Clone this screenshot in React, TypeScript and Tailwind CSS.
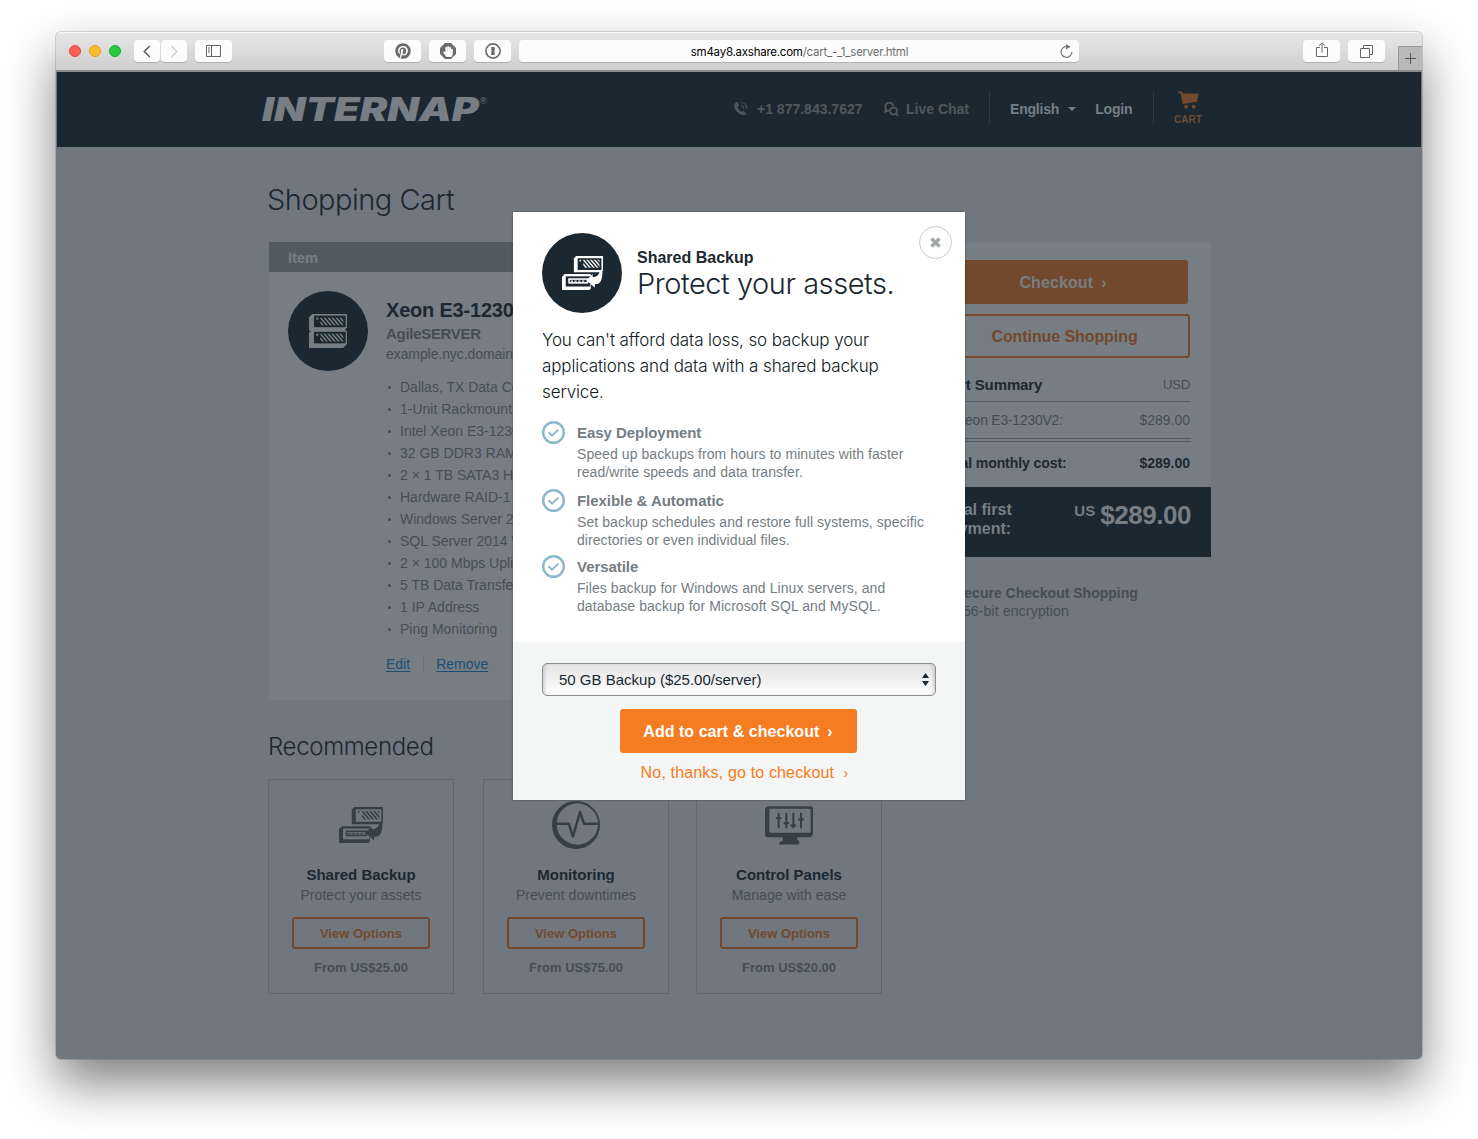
import React from "react";
import { FaPinterest, FaHandPaper } from "react-icons/fa";

const specs = [
  "Dallas, TX Data Center",
  "1-Unit Rackmount",
  "Intel Xeon E3-1230V2",
  "32 GB DDR3 RAM",
  "2 × 1 TB SATA3 HDD",
  "Hardware RAID-1",
  "Windows Server 2012",
  "SQL Server 2014 Web",
  "2 × 100 Mbps Uplinks",
  "5 TB Data Transfer",
  "1 IP Address",
  "Ping Monitoring",
];

type Tone = { fg: string; bg: string };

/** Diagonal vent slots, clipped to the given box. */
function Vents({ x, y, width, height, color }: { x: number; y: number; width: number; height: number; color: string }) {
  return (
    <svg x={x} y={y} width={width} height={height} viewBox={`0 0 ${width} ${height}`}>
      {[-1, 0, 1, 2, 3, 4, 5, 6].map((i) => (
        <path key={i} d={`M${i * 12 - 3} -4l36 42`} stroke={color} strokeWidth="4.6" />
      ))}
    </svg>
  );
}

function BackupIcon({ fg, bg, className }: Tone & { className: string }) {
  return (
    <svg viewBox="0 0 131 107" preserveAspectRatio="none" className={className}>
      <path d="M38 8 45 0H131V46L125 51H38Z" fill={fg} />
      <rect x="50" y="7" width="76" height="37" fill={bg} />
      <rect x="56" y="12" width="5" height="5" fill={fg} />
      <Vents x={68} y={12} width={52} height={25} color={fg} />
      <path d="M0 66 8 57H92V103L87 107H0Z" fill={fg} />
      <path d="M12 64H90V96H12Z" fill={bg} />
      <path d="M20 70H84V87H20Z" fill={fg} />
      <path d="M25 75H80V82H25Z" fill={bg} />
      <path d="M28 79H78" stroke={fg} strokeWidth="4" strokeDasharray="7 5" />
      <path d="M78 76 98 57 98 66C110 66 119 60 120 47H129C130 78 120 91 106 88L104 99Z" fill={fg} />
    </svg>
  );
}

function ServerIcon({ fg, bg, className }: Tone & { className: string }) {
  return (
    <svg viewBox="0 0 115 103" className={className}>
      <path d="M0 10 10 0H115V42L109 48 115 53V91L103 103H0V56L5 52 0 49Z" fill={fg} />
      {[5, 54].map((y) => (
        <g key={y}>
          <rect x="15" y={y} width="96" height="35" fill={bg} />
          <rect x="22" y={y + 6} width="6" height="6" fill={fg} />
          <Vents x={34} y={y + 6} width={70} height={23} color={fg} />
        </g>
      ))}
    </svg>
  );
}

function MonitoringIcon() {
  return (
    <svg viewBox="0 0 144 144" className="h-12 w-12">
      <circle cx="72" cy="72" r="72" fill="#343f48" />
      <circle cx="76" cy="69" r="62" fill="#70777e" />
      <path d="M12 68H50L63 106 84 33 96 68H140" fill="none" stroke="#343f48" strokeWidth="7.5" strokeLinejoin="round" />
    </svg>
  );
}

function ControlPanelIcon() {
  return (
    <svg viewBox="0 0 144 116" className="h-[39px] w-12">
      <path d="M10 0H138Q144 0 144 8V84Q140 93 132 93H8Q0 93 0 84V10Q2 1 10 0Z" fill="#343f48" />
      <rect x="13" y="8" width="124" height="72" rx="3" fill="#70777e" />
      <path d="M52 92H98L97 101 104 107 101 115H42V110L54 102Z" fill="#343f48" />
      <path d="M41 22V64M64 22V64M85 22V64M108 22V64" stroke="#343f48" strokeWidth="6" strokeLinecap="round" />
      <path d="M36 36H46M59 51H69M80 58H90M103 40H113" stroke="#343f48" strokeWidth="7" strokeLinecap="round" />
    </svg>
  );
}

function ToolButton({ children, className = "w-[37px]" }: { children: React.ReactNode; className?: string }) {
  return (
    <div className={`flex h-[22px] items-center justify-center rounded-[4px] bg-[#fcfcfc] shadow-[0_1px_0_rgba(0,0,0,0.16)] ${className}`}>
      {children}
    </div>
  );
}

function Toolbar() {
  return (
    <div className="flex h-10 shrink-0 items-start rounded-t-[5px] border-b-2 border-[#8b8b8b] bg-linear-to-b from-[#e8e8e8] to-[#cecece] pt-2 pl-[13px] shadow-[inset_0_1px_0_#f6f6f6]">
      <div className="mt-[5px] flex gap-2">
        <span className="h-3 w-3 rounded-full border border-[#e2463f] bg-[#ff5f57]" />
        <span className="h-3 w-3 rounded-full border border-[#e1a116] bg-[#ffbd2e]" />
        <span className="h-3 w-3 rounded-full border border-[#12ac28] bg-[#28ca42]" />
      </div>
      <div className="ml-[13px] flex gap-px">
        <ToolButton className="w-[26px]">
          <svg viewBox="0 0 8 14" className="h-[13px] w-2"><path d="M7 1 1 7l6 6" fill="none" stroke="#555" strokeWidth="1.4" /></svg>
        </ToolButton>
        <ToolButton className="w-[26px]">
          <svg viewBox="0 0 8 14" className="h-[13px] w-2"><path d="M1 1l6 6-6 6" fill="none" stroke="#c9c9c9" strokeWidth="1.3" /></svg>
        </ToolButton>
      </div>
      <div className="ml-2">
        <ToolButton>
          <svg viewBox="0 0 15 12" className="h-3 w-[15px]"><path d="M.5.5h14v11H.5zM5.5.5v11M2 3h2M2 5h2M2 7h2" fill="none" stroke="#666" /></svg>
        </ToolButton>
      </div>
      <div className="ml-[152px] flex gap-2">
        <ToolButton><FaPinterest className="h-4 w-4 text-[#6b6b6b]" /></ToolButton>
        <ToolButton>
          <span className="relative flex h-4 w-4 items-center justify-center">
            <svg viewBox="0 0 16 16" className="absolute inset-0"><path d="M5 0h6l5 5v6l-5 5H5l-5-5V5z" fill="#6b6b6b" /></svg>
            <FaHandPaper className="relative h-[11px] w-[10px] text-white" />
          </span>
        </ToolButton>
        <ToolButton>
          <svg viewBox="0 0 16 16" className="h-4 w-4"><circle cx="8" cy="8" r="7.1" fill="none" stroke="#6b6b6b" strokeWidth="1.7" /><path d="M6.300 4h3.400v3.400l-.7.800.7.800v3H6.300V8.500l.7-.8-.7-.8z" fill="#6b6b6b" /></svg>
        </ToolButton>
        <div className="flex h-[22px] w-[560px] items-center rounded-[4px] bg-[#fcfcfc] shadow-[0_1px_0_rgba(0,0,0,0.16)]">
          <div className="flex-1 pt-0.5 pl-5 text-center font-[Inter] text-[11.5px] leading-4 tracking-[-0.24px] whitespace-nowrap text-black">
            sm4ay8.axshare.com<span className="text-[#6c6c6c]">/cart_-_1_server.html</span>
          </div>
          <svg viewBox="0 0 13 14" className="mr-1.5 h-[14px] w-[13px]"><path d="M11.9 8A5.4 5.4 0 1 1 8 2.7" fill="none" stroke="#777" strokeWidth="1.2" /><path d="M6 0l4.600 2.800L6 5.400z" fill="#777" /></svg>
        </div>
      </div>
      <div className="ml-[224px] flex gap-2">
        <ToolButton>
          <svg viewBox="0 0 12 16" className="-mt-0.5 h-4 w-3"><path d="M4 5.500H.5v9h11v-9H8M6 10.500V1.200M3 3.800l3-3 3 3" fill="none" stroke="#666" /></svg>
        </ToolButton>
        <ToolButton>
          <svg viewBox="0 0 13 13" className="h-[13px] w-[13px]"><path d="M.5 3.500h9v9h-9zM3.500 3V.5h9v9H10" fill="none" stroke="#666" /></svg>
        </ToolButton>
      </div>
      <div className="mt-1.5 ml-auto flex h-[24px] w-6 items-center justify-center border-t border-l border-[#999] bg-[#b9b9b9]">
        <svg viewBox="0 0 11 11" className="h-[11px] w-[11px]"><path d="M5.500 0v11M0 5.500h11" stroke="#555" /></svg>
      </div>
    </div>
  );
}

function SiteHeader() {
  return (
    <header className="flex h-[75px] shrink-0 items-start bg-[#1b2831] pl-[205px] text-[14px] leading-5 font-bold text-[#50585e]">
      <div className="mt-[17px] flex w-[471px] items-start text-[#777e84]">
        <div className="h-10 w-[218px]">
          <span className="inline-block origin-left scale-x-[1.25] font-[Inter] text-[33px] leading-10 font-black italic">INTERNAP</span>
        </div>
        <span className="mt-2 text-[9px] leading-[9px] font-normal">®</span>
      </div>
      <svg viewBox="0 0 16 15" className="mt-[29px] h-[15px] w-4" fill="none" stroke="currentColor" strokeWidth="1.2">
        <path d="M3 1.300C.2 3.500 1.300 8 4.300 11S11.500 15 13.300 12.400L10.600 9.900 8.700 10.800C6.700 9.800 5.300 8.200 4.700 6.200L5.900 4.500 5 1.300Z" fill="currentColor" stroke="none" />
        <path d="M8 4.500A3.200 3.200 0 0 1 10.800 7.600M8.300 1.500A6 6 0 0 1 13.700 7.500" />
      </svg>
      <span className="mt-[27px] ml-2 w-[106px]">+1 877.843.7627</span>
      <svg viewBox="0 0 15 15" className="mt-[30px] ml-[21px] h-[15px] w-[15px]" fill="none" stroke="currentColor" strokeWidth="1.9">
        <path d="M5 8.300 1.200 9.500 2 6.800A4 4 0 1 1 9.300 4" />
        <circle cx="9.5" cy="9" r="3.5" />
        <path d="M12 11.500 14 13.800" />
      </svg>
      <span className="mt-[27px] ml-[7px] w-[83px]">Live Chat</span>
      <div className="mt-[19px] flex h-[33px] w-[165px] border-x border-[#2c3942] pt-2 pl-5 tracking-[-0.2px] text-[#777e84]">
        <span>English</span>
        <svg viewBox="0 0 8 4" className="mt-2 ml-[9px] h-1 w-2"><path d="M0 0h8L4 4z" fill="currentColor" /></svg>
        <span className="ml-[19px]">Login</span>
      </div>
      <div className="mt-[19px] ml-5 flex w-7 flex-col items-center text-[#73492d]">
        <svg viewBox="0 0 62 55" className="h-[18px] w-[21px]" fill="currentColor">
          <path d="M0 1H10L15 8H62L57 33 17 39H12L8 8H1Z" />
          <circle cx="24" cy="48" r="6" /><circle cx="47" cy="48" r="6" />
        </svg>
        <span className="mt-[5px] text-[10px] leading-3">CART</span>
      </div>
    </header>
  );
}

function CartItem() {
  return (
    <section className="h-[458px] w-[614px] bg-[#777e83]">
      <div className="h-[30px] bg-[#515c62] pt-1.5 pl-[19px] text-[14.5px] leading-5 font-bold text-[#777e83]">Item</div>
      <div className="flex pt-[19px] pl-[19px]">
        <div className="flex h-20 w-20 items-center justify-center rounded-full bg-[#1b2831]">
          <ServerIcon fg="#777e83" bg="#1b2831" className="h-[34px] w-[38px]" />
        </div>
        <div className="ml-[18px] pt-[7px] text-[14px] leading-5 text-[#454e55]">
          <h2 className="text-[20px] leading-6 font-bold tracking-[-0.2px] text-[#1b2831]">Xeon E3-1230V2</h2>
          <div className="mt-0.5 text-[15px] font-bold tracking-[-0.3px]">AgileSERVER</div>
          <div className="tracking-[-0.08px]">example.nyc.domain.com</div>
          <ul className="mt-3 leading-[22px]">
            {specs.map((s) => (
              <li key={s} className="flex items-center">
                <span className="mt-px mr-[9px] ml-0.5 h-[3px] w-[3px] rounded-full bg-[#454e55]" />
                {s}
              </li>
            ))}
          </ul>
          <div className="mt-[14px] flex items-center text-[#1c4e75]">
            <a className="underline underline-offset-2">Edit</a>
            <span className="mr-3 ml-[13px] h-[14px] w-px bg-[#687077]" />
            <a className="underline underline-offset-2">Remove</a>
          </div>
        </div>
      </div>
    </section>
  );
}

function OfferCard({ icon, title, blurb, price }: { icon: React.ReactNode; title: string; blurb: string; price: string }) {
  return (
    <article className="flex h-[215px] w-[186px] flex-col items-center border border-[#5f686f] pt-5 text-[#454e55]">
      <div className="flex h-[50px] items-center">{icon}</div>
      <h3 className="mt-[15px] text-[15px] leading-5 font-bold text-[#1b2831]">{title}</h3>
      <p className="text-[14px] leading-5 tracking-[0.07px]">{blurb}</p>
      <button className="mt-3 h-8 w-[138px] rounded-[3px] border-2 border-[#73492d] pt-px text-[13px] leading-7 font-bold text-[#73492d]">View Options</button>
      <p className="mt-[9px] text-[13px] leading-5 font-bold">{price}</p>
    </article>
  );
}

function Summary() {
  return (
    <aside className="w-[293px] text-[14px] leading-5 text-[#454e55]">
      <div className="h-[245px] bg-[#777e83] pt-[18px] pr-[21px] pl-5">
        <button className="block h-11 w-[250px] rounded-[3px] bg-[#73492d] pt-0.5 text-[16px] font-bold tracking-[0.1px] text-[#777e83]">
          Checkout<span className="ml-2">›</span>
        </button>
        <button className="mt-[10px] block h-11 w-full rounded-[3px] border-2 border-[#73492d] pt-0.5 pl-px text-[16px] font-bold tracking-[-0.08px] text-[#73492d]">Continue Shopping</button>
        <div className="mt-[17px] flex justify-between border-b border-[#555e65] pb-[6px] pl-[3px]">
          <span className="text-[15px] font-bold tracking-[-0.1px] text-[#1b2831]">Cart Summary</span>
          <span className="text-[13.5px] tracking-[-0.4px]">USD</span>
        </div>
        <div className="mt-2 -mr-px flex h-[32px] justify-between border-b-4 border-double border-[#50595f] pr-px pl-[18px]">
          <span className="tracking-[-0.25px]">Xeon E3-1230V2:</span>
          <span>$289.00</span>
        </div>
        <div className="mt-[11px] flex justify-between pl-0.5 font-bold text-[#1b2831]">
          <span className="tracking-[-0.08px]">Total monthly cost:</span>
          <span>$289.00</span>
        </div>
      </div>
      <div className="flex h-[70px] items-start justify-between bg-[#1b2831] pt-[13px] pr-5 pl-[22px] font-bold text-[#777e83]">
        <div className="text-[16px] leading-[19px]">Total first<br />payment:</div>
        <div className="flex items-start">
          <span className="mr-[5px] text-[15px] leading-[22px]">US</span>
          <span className="text-[26px] leading-[30px] tracking-[-0.45px]">$289.00</span>
        </div>
      </div>
      <div className="mt-[27px] pl-[37px] leading-[18px]">
        <div className="font-bold">Secure Checkout Shopping</div>
        <div className="tracking-[0.15px]">256-bit encryption</div>
      </div>
    </aside>
  );
}

function Feature({ title, text, className }: { title: string; text: React.ReactNode; className: string }) {
  return (
    <li className={`flex ${className}`}>
      <svg viewBox="0 0 23 23" className="h-[23px] w-[23px]" fill="none" stroke="#8bb9cc">
        <circle cx="11.5" cy="11.5" r="10.3" strokeWidth="2.4" />
        <path d="M6.600 11.300 10 14.600 16.300 8.600" strokeWidth="2" />
      </svg>
      <div className="ml-3 pt-0.5">
        <h3 className="text-[15px] leading-5 font-bold tracking-[-0.05px]">{title}</h3>
        <p className="mt-0.5 text-[14px] leading-[18px] tracking-[0.07px]">{text}</p>
      </div>
    </li>
  );
}

function BackupDialog() {
  return (
    <div role="dialog" className="absolute top-[180px] left-[457px] flex h-[588px] w-[452px] flex-col bg-white shadow-[0_0_2px_rgba(0,0,0,0.4)]">
      <div className="h-[430px] px-[29px] pt-[21px]">
        <div className="flex">
          <div className="flex h-20 w-20 items-center justify-center rounded-full bg-[#1b2831]">
            <BackupIcon fg="#ffffff" bg="#1b2831" className="h-[34px] w-[41px]" />
          </div>
          <div className="ml-[15px] pt-[15px] text-[#1b2831]">
            <h2 className="text-[16px] leading-5 font-bold">Shared Backup</h2>
            <p className="-mt-px font-[Inter] text-[29px] leading-[34px] font-light tracking-[-0.45px] whitespace-nowrap">Protect your assets.</p>
          </div>
          <button className="-mt-[7px] -mr-4 ml-auto flex h-[33px] w-[33px] items-center justify-center rounded-full border border-[#ccc]">
            <svg viewBox="0 0 11 11" className="h-[11px] w-[11px]"><path d="M1.500 1.500l8 8M9.500 1.500l-8 8" stroke="#a3a9aa" strokeWidth="3.6" /></svg>
          </button>
        </div>
        <p className="mt-[14px] font-[Inter] text-[17px] leading-[26px] font-light tracking-[-0.12px] text-[#0f1a22]">
          You can't afford data loss, so backup your<br />applications and data with a shared backup<br />service.
        </p>
        <ul className="mt-4 text-[#757d84]">
          <Feature className="h-[68px]" title="Easy Deployment" text={<>Speed up backups from hours to minutes with faster<br />read/write speeds and data transfer.</>} />
          <Feature className="h-[66px]" title="Flexible & Automatic" text={<>Set backup schedules and restore full systems, specific<br />directories or even individual files.</>} />
          <Feature className="h-[66px]" title="Versatile" text={<>Files backup for Windows and Linux servers, and<br />database backup for Microsoft SQL and MySQL.</>} />
        </ul>
      </div>
      <div className="flex flex-1 flex-col items-center bg-[#f4f6f5] px-[29px] pt-[21px]">
        <div className="flex h-[33px] w-full items-center justify-between rounded-[5px] border border-[#8e9091] bg-linear-to-b from-[#e4e4e4] to-[#fdfdfd] pr-[6px] pl-4 text-[15px] text-[#1b2831] shadow-[inset_3px_0_3px_-1px_rgba(0,0,0,0.13),inset_-3px_0_3px_-1px_rgba(0,0,0,0.13)]">
          <span className="pt-0.5">50 GB Backup ($25.00/server)</span>
          <svg viewBox="0 0 7 13" className="h-[13px] w-[7px]"><path d="M3.500 0 7 5H0zM0 8h7l-3.500 5z" fill="#1b2831" /></svg>
        </div>
        <button className="mt-[13px] mr-0.5 h-11 w-[237px] rounded-[3px] bg-[#f57c20] pt-0.5 text-[16px] font-bold tracking-[0.04px] text-white">
          Add to cart &amp; checkout<span className="ml-2">›</span>
        </button>
        <a className="mt-[10px] pl-[11px] text-[16px] leading-5 tracking-[0.16px] text-[#f57c20]">
          No, thanks, go to checkout<span className="ml-[9px] text-[15px]">›</span>
        </a>
      </div>
    </div>
  );
}

export default function App() {
  return (
    <div className="h-[1139px] w-[1478px] overflow-hidden bg-white pt-8 pl-14 font-['Liberation_Sans',Arial,sans-serif]">
      <div className="relative flex h-[1027px] w-[1366px] flex-col rounded-[5px] bg-[#70777e] shadow-[0_0_0_1px_rgba(0,0,0,0.14),0_24px_50px_rgba(0,0,0,0.5)]">
        <Toolbar />
        <div className="mx-px flex flex-1 flex-col">
          <SiteHeader />
          <main className="flex flex-1 flex-col pt-[35px] pl-[211px]">
            <h1 className="-ml-px font-[Inter] text-[29px] leading-9 font-light tracking-[-0.5px] text-[#1b2831]">Shopping Cart</h1>
            <div className="mt-6 flex gap-[35px] pl-px">
              <div>
                <CartItem />
                <h2 className="mt-8 -ml-px font-[Inter] text-[24px] leading-[30px] font-light tracking-[-0.33px] text-[#1b2831]">Recommended</h2>
                <div className="mt-[17px] -ml-px flex gap-[29px]">
                  <OfferCard icon={<BackupIcon fg="#343f48" bg="#70777e" className="h-9 w-11" />} title="Shared Backup" blurb="Protect your assets" price="From US$25.00" />
                  <OfferCard icon={<MonitoringIcon />} title="Monitoring" blurb="Prevent downtimes" price="From US$75.00" />
                  <div className="-ml-0.5">
                    <OfferCard icon={<ControlPanelIcon />} title="Control Panels" blurb="Manage with ease" price="From US$20.00" />
                  </div>
                </div>
              </div>
              <Summary />
            </div>
          </main>
        </div>
        <BackupDialog />
      </div>
    </div>
  );
}
